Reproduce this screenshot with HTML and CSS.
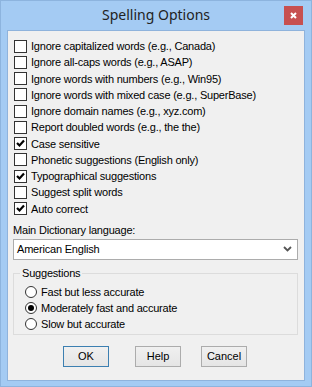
FILE: index.html
```html
<!DOCTYPE html>
<html lang="en">
<head>
    <meta charset="UTF-8">
    <title>Spelling Options</title>
    <link rel="stylesheet" href="styles.css">
</head>
<body>
    <div class="window">
        <div class="titlebar">
            <div></div>
            <div class="title">Spelling Options</div>
            <div class="close">
                <svg width="19" height="19" viewBox="0 0 19 19">
                    <path d="M7 7 L12 12 M12 7 L7 12" stroke="#fff" stroke-width="2" fill="none"/>
                </svg>
            </div>
        </div>
        <div class="client">
            <div class="options">
                <label class="opt"><span class="box"></span>Ignore capitalized words (e.g., Canada)</label>
                <label class="opt"><span class="box"></span>Ignore all-caps words (e.g., ASAP)</label>
                <label class="opt"><span class="box"></span>Ignore words with numbers (e.g., Win95)</label>
                <label class="opt"><span class="box"></span>Ignore words with mixed case (e.g., SuperBase)</label>
                <label class="opt"><span class="box"></span>Ignore domain names (e.g., xyz.com)</label>
                <label class="opt"><span class="box"></span>Report doubled words (e.g., the the)</label>
                <label class="opt"><span class="box"><svg width="11" height="11" viewBox="0 0 11 11"><polyline points="2,5 4.5,7.5 9,2.5" stroke="#000" stroke-width="2.2" fill="none"/></svg></span>Case sensitive</label>
                <label class="opt"><span class="box"></span>Phonetic suggestions (English only)</label>
                <label class="opt"><span class="box"><svg width="11" height="11" viewBox="0 0 11 11"><polyline points="2,5 4.5,7.5 9,2.5" stroke="#000" stroke-width="2.2" fill="none"/></svg></span>Typographical suggestions</label>
                <label class="opt"><span class="box"></span>Suggest split words</label>
                <label class="opt"><span class="box"><svg width="11" height="11" viewBox="0 0 11 11"><polyline points="2,5 4.5,7.5 9,2.5" stroke="#000" stroke-width="2.2" fill="none"/></svg></span>Auto correct</label>
            </div>

            <div class="dict-label">Main Dictionary language:</div>
            <div class="combo">
                <span>American English</span>
                <svg width="9" height="6" viewBox="0 0 9 6">
                    <polyline points="1,1 4.5,4.5 8,1" stroke="#555" stroke-width="1.8" fill="none"/>
                </svg>
            </div>

            <fieldset class="group">
                <legend>Suggestions</legend>
                <label class="opt radio-row"><span class="radio"></span>Fast but less accurate</label>
                <label class="opt radio-row"><span class="radio on"></span>Moderately fast and accurate</label>
                <label class="opt radio-row"><span class="radio"></span>Slow but accurate</label>
            </fieldset>

            <div class="buttons">
                <button class="btn default">OK</button>
                <button class="btn help">Help</button>
                <button class="btn cancel">Cancel</button>
            </div>
        </div>
    </div>
</body>
</html>
```

FILE: styles.css
```css
body {
    margin: 0;
    padding: 0;
    background-color: #a4cbf3;
    font-family: "Liberation Sans", Arial, sans-serif;
    font-size: 11px;
    color: #000;
}
.window {
    width: 312px;
    height: 387px;
    box-sizing: border-box;
    border: 1px solid #8db4de;
    background-color: #a4cbf3;
    padding: 0 6px 6px 6px;
}
.titlebar {
    height: 29px;
    margin: 0 -6px;
    display: grid;
    grid-template-columns: 1fr auto 1fr;
}
.title {
    font-family: "Noto Sans", sans-serif;
    font-size: 14px;
    color: #222;
    line-height: 28px;
}
.close {
    justify-self: end;
    width: 19px;
    height: 19px;
    margin-top: 5px;
    margin-right: 8px;
    background-color: #c75050;
}
.close svg {
    display: block;
}
.client {
    height: 351px;
    box-sizing: border-box;
    border: 1px solid #8fb3dc;
    background-color: #f0f0f0;
    padding-top: 7px;
}
.options {
    padding-left: 6px;
}
.opt {
    display: flex;
    align-items: center;
    height: 16.25px;
    letter-spacing: -0.2px;
    white-space: nowrap;
}
.box {
    width: 13px;
    height: 13px;
    box-sizing: border-box;
    border: 1px solid #333;
    background-color: #fff;
    margin-right: 4px;
    flex-shrink: 0;
}
.box svg {
    display: block;
}
.dict-label {
    margin: 7px 0 2px 5px;
    height: 13px;
    line-height: 13px;
    letter-spacing: -0.2px;
}
.combo {
    margin-left: 5px;
    width: 285px;
    height: 21px;
    box-sizing: border-box;
    border: 1px solid #acacac;
    background-color: #fff;
    display: flex;
    align-items: center;
    justify-content: space-between;
    padding: 0 3px 0 3px;
    letter-spacing: -0.2px;
}
.combo svg {
    margin-right: 2px;
}
.group {
    margin: 7px 0 0 5px;
    width: 285px;
    box-sizing: border-box;
    border: 1px solid #dcdcdc;
    padding: 4px 0 1px 11px;
}
.group legend {
    padding: 0 2px;
    margin-left: -5px;
    line-height: 13px;
    letter-spacing: -0.2px;
}
.radio {
    width: 12px;
    height: 12px;
    box-sizing: border-box;
    border: 1px solid #333;
    border-radius: 50%;
    background-color: #fff;
    margin-right: 4px;
    flex-shrink: 0;
    display: flex;
    align-items: center;
    justify-content: center;
}
.radio.on::after {
    content: "";
    width: 6px;
    height: 6px;
    border-radius: 50%;
    background-color: #000;
}
.buttons {
    display: flex;
    margin-top: 11px;
    padding-left: 55px;
}
.btn {
    width: 46px;
    height: 21px;
    box-sizing: border-box;
    border: 1px solid #acacac;
    background: linear-gradient(#f0f0f0, #e5e5e5);
    font-family: "Liberation Sans", Arial, sans-serif;
    font-size: 11px;
    color: #000;
    padding: 0;
}
.btn.default {
    border-color: #3c7fb1;
}
.btn.help {
    margin-left: 26px;
}
.btn.cancel {
    margin-left: 20px;
}
```
